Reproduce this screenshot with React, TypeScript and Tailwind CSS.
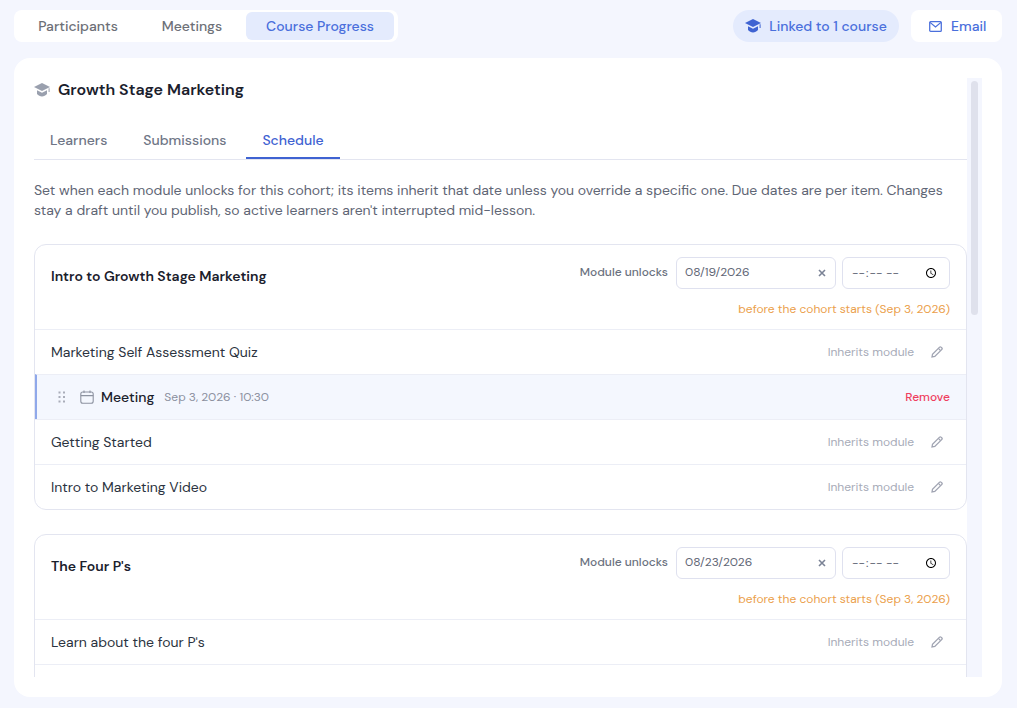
const font = 'font-["DM_Sans","Inter","Liberation_Sans",sans-serif]';

const Hat = ({ className }: { className: string }) => (
  <svg viewBox="0 0 16 14" fill="currentColor" className={className}>
    <path d="M8 0 16 4 8 8 0 4 8 0Z" />
    <path d="M3 7.2 8 9.7 13 7.2V11C11.6 12.6 9.9 13.4 8 13.4S4.4 12.6 3 11V7.2Z" />
    <path d="M14.6 5.2H15.6V9H14.6Z" />
  </svg>
);

const MailIcon = () => (
  <svg viewBox="0 0 14 12" fill="none" stroke="currentColor" strokeWidth={1.4} className="h-[11px] w-[13px]">
    <rect x="0.7" y="0.7" width="12.6" height="10.6" rx="1" />
    <path d="M1 1.5 7 6.5 13 1.5" />
  </svg>
);

const CalendarIcon = () => (
  <svg viewBox="0 0 14 14" fill="none" stroke="currentColor" strokeWidth={1.1} className="h-[14px] w-[14px]">
    <rect x="0.8" y="2" width="12.4" height="11.2" rx="2" />
    <path d="M0.8 5.6H13.2M4 0.5V3M10 0.5V3" />
  </svg>
);

const PencilIcon = () => (
  <svg viewBox="0 0 12 12" fill="none" stroke="currentColor" strokeWidth={1.3} className="h-3 w-3">
    <path d="M1 11 1.5 8.2 8.6 1.1C9 .7 9.6.7 10 1.1L10.9 2C11.3 2.4 11.3 3 10.9 3.4L3.8 10.5 1 11Z" />
    <path d="M7.4 2.4 9.6 4.6" />
  </svg>
);

const GripDots = () => (
  <svg viewBox="0 0 8 12" fill="currentColor" className="h-3 w-2">
    <rect x="0.5" y="0.5" width="2" height="2" />
    <rect x="5" y="0.5" width="2" height="2" />
    <rect x="0.5" y="5" width="2" height="2" />
    <rect x="5" y="5" width="2" height="2" />
    <rect x="0.5" y="9.5" width="2" height="2" />
    <rect x="5" y="9.5" width="2" height="2" />
  </svg>
);

const ClearIcon = () => (
  <svg viewBox="0 0 8 8" stroke="currentColor" strokeWidth={1.6} className="h-2 w-2">
    <path d="M1 1 7 7M7 1 1 7" />
  </svg>
);

const ItemRow = ({ title }: { title: string }) => (
  <div className="flex h-[45px] items-center justify-between border-t border-[#eceef6] pl-4 pr-[23px]">
    <span className="text-sm text-[#2b3340]">{title}</span>
    <div className="flex items-center gap-[17px]">
      <span className="text-xs text-[#a7abb8]">Inherits module</span>
      <span className="text-[#a0a4b2]">
        <PencilIcon />
      </span>
    </div>
  </div>
);

const ModuleHeader = ({ title, date }: { title: string; date: string }) => (
  <div className="flex h-[84px] justify-between pl-4 pr-4 pt-3">
    <h3 className="mt-[9px] text-sm font-semibold text-[#1a202c]">{title}</h3>
    <div className="flex flex-col items-end">
      <div className="flex items-center">
        <span className="mb-[2px] mr-2 text-xs font-medium text-[#6b7280]">Module unlocks</span>
        <div className="flex h-8 w-40 items-center justify-between rounded-md border border-[#dfe1ef] pl-2 pr-[9px] text-xs text-[#5f6675]">
          <span className="mb-[2px]">{date}</span>
          <span className="text-[#7b8396]">
            <ClearIcon />
          </span>
        </div>
        <input
          type="time"
          className="ml-[6px] h-8 w-[108px] rounded-md border border-[#dfe1ef] px-2 text-xs text-[#5f6675]"
        />
      </div>
      <p className="mt-3 text-xs text-[#eba04b]">before the cohort starts (Sep 3, 2026)</p>
    </div>
  </div>
);

export default function App() {
  return (
    <div className={`flex h-[708px] flex-col gap-4 overflow-hidden bg-[#f4f6fe] pb-[11px] pl-[14px] pr-[15px] pt-[10px] ${font}`}>
      {/* Top bar */}
      <div className="flex items-center justify-between">
        <div className="flex h-8 w-[384px] items-center gap-1 rounded-lg bg-white px-1 text-sm font-medium text-[#6d7077]">
          <button className="h-7 w-[120px] rounded-md">Participants</button>
          <button className="h-7 w-[100px] rounded-md">Meetings</button>
          <button className="h-7 w-[148px] rounded-md bg-[#e4ebfd] text-[#4a6fdc]">Course Progress</button>
        </div>
        <div className="flex items-center gap-3 text-sm font-medium text-[#4a6fdc]">
          <div className="flex h-8 w-[166px] items-center justify-center gap-2 rounded-full bg-[#e4ebfd]">
            <Hat className="h-[14px] w-4 text-[#3f63d2]" />
            Linked to 1 course
          </div>
          <div className="flex h-8 w-[91px] items-center gap-[9px] rounded-lg bg-white pl-[18px]">
            <MailIcon />
            Email
          </div>
        </div>
      </div>

      {/* Main card */}
      <div className="flex min-h-0 flex-1 rounded-2xl bg-white py-5 pl-5 pr-5">
        <div className="min-w-0 flex-1 overflow-hidden">
          <div className="flex items-center gap-2 pb-4">
            <Hat className="h-[14px] w-4 text-[#9aa0ae]" />
            <h2 className="text-base font-semibold text-[#1a202c]">Growth Stage Marketing</h2>
          </div>
          <div className="mt-1 flex h-[38px] gap-1 border-b border-[#e3e5f0] text-sm font-medium">
            <div className="flex items-center border-b-2 border-transparent px-4 text-[#6f7686]">Learners</div>
            <div className="flex items-center border-b-2 border-transparent px-4 text-[#6f7686]">Submissions</div>
            <div className="flex items-center border-b-2 border-[#3f63d2] px-4 text-[#3f63d2]">Schedule</div>
          </div>
          <p className="mb-6 mt-5 text-sm leading-5 text-[#5f6675]">
            Set when each module unlocks for this cohort; its items inherit that date unless you override a specific one. Due dates are per item. Changes stay a draft until you publish, so active learners aren't interrupted mid-lesson.
          </p>

          <section className="mb-6 rounded-xl border border-[#e3e5f0]">
            <ModuleHeader title="Intro to Growth Stage Marketing" date="08/19/2026" />
            <ItemRow title="Marketing Self Assessment Quiz" />
            <div className="flex h-[45px] items-center justify-between border-l-2 border-t border-l-[#8fa8ea] border-t-[#eceef6] bg-[#f4f7fe] pl-[21px] pr-4">
              <div className="flex items-center">
                <span className="text-[#a9adb9]">
                  <GripDots />
                </span>
                <span className="ml-[14px] text-[#8d93a1]">
                  <CalendarIcon />
                </span>
                <span className="ml-[7px] text-sm font-medium text-[#1a202c]">Meeting</span>
                <span className="ml-[10px] text-xs text-[#8b909e]">Sep 3, 2026 · 10:30</span>
              </div>
              <button className="text-xs font-medium text-[#ef3f5e]">Remove</button>
            </div>
            <ItemRow title="Getting Started" />
            <ItemRow title="Intro to Marketing Video" />
          </section>

          <section className="rounded-xl border border-[#e3e5f0]">
            <ModuleHeader title="The Four P's" date="08/23/2026" />
            <ItemRow title="Learn about the four P's" />
            <div className="h-[45px] border-t border-[#eceef6]" />
          </section>
        </div>

        {/* Scrollbar */}
        <div className="w-[15px] shrink-0 bg-[#f4f6fe] px-1 pt-[3px]">
          <div className="h-[234px] rounded-full bg-[#dfe1ec]" />
        </div>
      </div>
    </div>
  );
}
